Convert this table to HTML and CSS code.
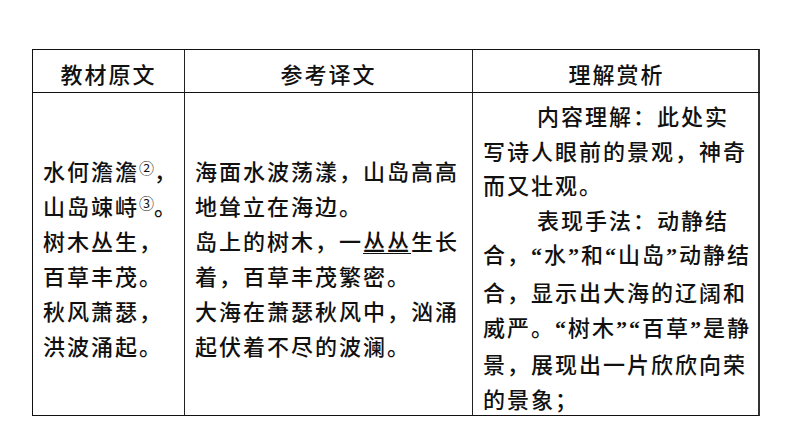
FILE: index.html
```html
<!DOCTYPE html>
<html lang="zh-CN">
<head>
<meta charset="utf-8">
<link rel="stylesheet" href="styles.css">
</head>
<body>
<div class="page">
  <div class="grid">
    <div class="cell head c1">教材原文</div>
    <div class="cell head c2">参考译文</div>
    <div class="cell head c3">理解赏析</div>
    <div class="cell body c1">
      <div class="lines">
        水何澹澹<sup class="n">②</sup>，<br>
        山岛竦峙<sup class="n">③</sup>。<br>
        树木丛生，<br>
        百草丰茂。<br>
        秋风萧瑟，<br>
        洪波涌起。
      </div>
    </div>
    <div class="cell body c2">
      <div class="lines">
        海面水波荡漾，山岛高高<br>
        地耸立在海边。<br>
        岛上的树木，一<span class="u">丛丛</span>生长<br>
        着，百草丰茂繁密。<br>
        大海在萧瑟秋风中，汹涌<br>
        起伏着不尽的波澜。
      </div>
    </div>
    <div class="cell body c3">
      <div class="lines top">
        <p class="para">内容理解：此处实<br>写诗人眼前的景观，神奇<br>而又壮观。</p>
        <p class="para">表现手法：动静结<br>合，<span class="q">“</span>水<span class="q">”</span>和<span class="q">“</span>山岛<span class="q">”</span>动静结<br>合，显示出大海的辽阔和<br>威严。<span class="q">“</span>树木<span class="q">”“</span>百草<span class="q">”</span>是静<br>景，展现出一片欣欣向荣<br>的景象；</p>
      </div>
    </div>
  </div>
</div>
</body>
</html>
```
FILE: styles.css
```css
html, body {
  margin: 0;
  padding: 0;
  background: #ffffff;
}
.page {
  width: 794px;
  height: 447px;
  padding: 49px 0 0 32px;
  box-sizing: border-box;
  font-family: "Noto Sans CJK SC", "Noto Sans", sans-serif;
  color: #111;
}
.grid {
  display: grid;
  grid-template-columns: 152px 288px 287px;
  grid-template-rows: 43px 322px;
  border-top: 1px solid #111;
  border-left: 1px solid #111;
  border-right: 2px solid #333;
  border-bottom: 1px solid #111;
  width: 728px;
  box-sizing: border-box;
}
.cell {
  box-sizing: border-box;
  font-size: 22px;
  font-weight: 500;
  letter-spacing: 2px;
  white-space: nowrap;
  overflow: hidden;
}
.c1, .c2 {
  border-right: 1px solid #222;
}
.head {
  display: flex;
  align-items: center;
  justify-content: center;
  border-bottom: 1px solid #111;
  padding-top: 3px;
  line-height: 1;
}
.body {
  padding-left: 10px;
}
.lines {
  line-height: 35px;
  padding-top: 60px;
}
.lines.top {
  padding-top: 5px;
  line-height: 34.6px;
}
.para {
  margin: 0;
  text-indent: 54px;
}
.n {
  font-family: "Noto Sans CJK SC", sans-serif;
  font-size: 15px;
  font-weight: normal;
  letter-spacing: 0;
  vertical-align: 6px;
  line-height: 0;
}
.u {
  text-decoration: underline;
  text-decoration-thickness: 1px;
  text-underline-offset: 3px;
}
.q {
  font-family: "Liberation Serif", serif;
  font-weight: bold;
}
```
